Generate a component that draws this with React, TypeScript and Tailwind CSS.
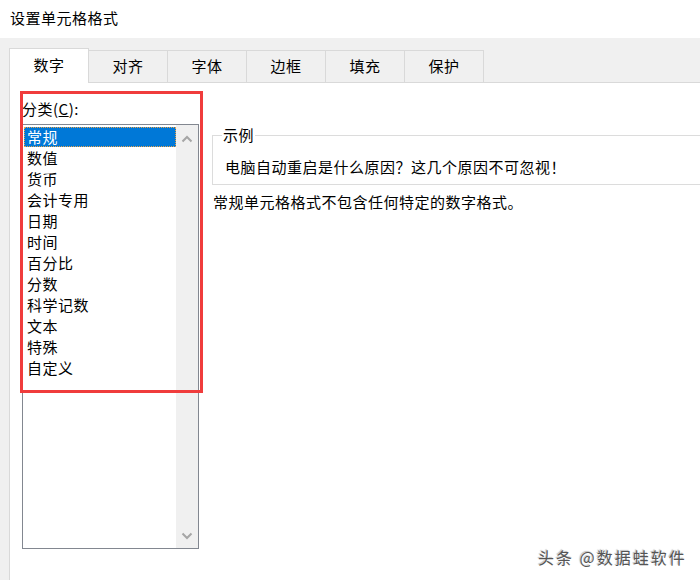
const categories = ["常规", "数值", "货币", "会计专用", "日期", "时间", "百分比", "分数", "科学记数", "文本", "特殊", "自定义"];
const tabs = ["数字", "对齐", "字体", "边框", "填充", "保护"];

function Chevron({ up }: { up?: boolean }) {
    return (
        <svg width="12" height="8" viewBox="0 0 12 8">
            <path d={up ? "M1.5 6.5 L6 2 L10.5 6.5" : "M1.5 1.5 L6 6 L10.5 1.5"} fill="none" stroke="#a6a6a6" strokeWidth="2"/>
        </svg>
    );
}

export default function App() {
    return (
        <div className="w-[700px] h-[580px] bg-[#f0f0f0] relative overflow-hidden text-black font-['Noto_Sans_CJK_SC','Microsoft_YaHei',sans-serif] text-[15px] tracking-[0.5px]">
            {/* title */}
            <div className="h-[38px] bg-white flex items-center pl-[10px] pb-[2px]">设置单元格格式</div>

            <div className="pt-[10px] pl-[9px]">
                {/* tabs */}
                <div className="flex items-end h-[35px] -mb-px relative z-10">
                    {tabs.map((t, i) => i === 0 ? (
                        <div key={t} className="w-[80px] h-[35px] bg-white border-x border-t border-[#d9d9d9] flex items-center justify-center pb-[2px]">{t}</div>
                    ) : (
                        <div key={t} className="w-[79px] h-[33px] bg-[#f0f0f0] border-t border-r border-b border-[#d9d9d9] flex items-center justify-center">{t}</div>
                    ))}
                </div>

                {/* panel */}
                <div className="h-[500px] bg-white border-t border-l border-[#d9d9d9] flex">
                    <div className="pl-[12px]">
                        <div className="mt-[15px] h-[21px] leading-[21px]">分类(<span className="underline">C</span>):</div>
                        <div className="mt-[5px] w-[177px] h-[425px] border border-[#828790] flex">
                            <div className="flex-1 pt-[2px] pl-[1px]">
                                {categories.map((c, i) => (
                                    <div key={c} className={i === 0
                                        ? "h-[20px] mb-px leading-[18px] pl-[2px] bg-[#0078d7] text-white border border-dotted border-[#e8a24a]"
                                        : "h-[21px] leading-[20px] pl-[3px]"}>{c}</div>
                                ))}
                            </div>
                            <div className="w-[22px] bg-[#f0f0f0] flex flex-col items-center justify-between pt-[10px] pb-[8px]">
                                <Chevron up/>
                                <Chevron/>
                            </div>
                        </div>
                    </div>

                    <div className="ml-[13px] w-[520px] shrink-0">
                        <fieldset className="mt-[42px] border border-[#dcdcdc] pl-[9px] pb-[7px]">
                            <legend className="leading-[20px] px-[1px]">示例</legend>
                            <div className="pt-[12px] pl-[3px] leading-[20px]">电脑自动重启是什么原因？这几个原因不可忽视！</div>
                        </fieldset>
                        <div className="mt-[7px] pl-[1px] leading-[20px]">常规单元格格式不包含任何特定的数字格式。</div>
                    </div>
                </div>
            </div>

            {/* annotation */}
            <div className="absolute left-[20px] top-[91px] w-[183px] h-[302px] border-[3px] border-[#f03c3c]"></div>

            {/* watermark */}
            <div className="absolute left-[538px] top-[545px] text-[16px] tracking-[2px] text-[#555555] [text-shadow:1px_1px_1px_#ffffff,-1px_-1px_1px_#bbbbbb]">头条 @数据蛙软件</div>
        </div>
    );
}
